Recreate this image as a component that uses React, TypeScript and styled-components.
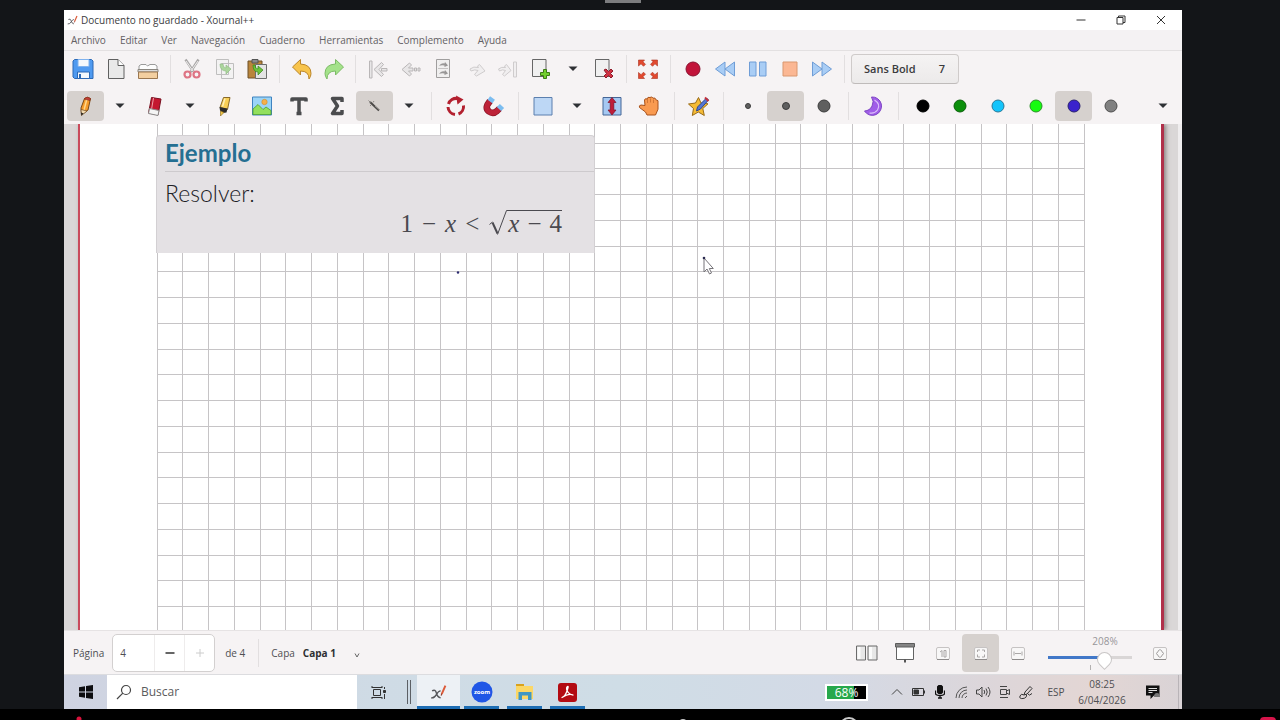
import React, { ReactNode, useState } from "react";
import styled, { createGlobalStyle } from "styled-components";

const GlobalStyle = createGlobalStyle`
  * { box-sizing: border-box; }
  body { margin: 0; background: #131518; }
  button, input, select { font: inherit; color: inherit; }
`;

/* ---------- frame ---------- */

const Screen = styled.div`
  height: 100vh;
  min-height: 480px;
  display: flex;
  flex-direction: column;
  background: #131518;
  color: #4f4f52;
  font-family: "Open Sans", "Noto Sans", sans-serif;
  font-size: 10px;
  line-height: 14px;
  overflow: hidden;
`;

const TopEdge = styled.div`
  flex: 0 0 10px;
  display: flex;
  justify-content: center;
`;

const Handle = styled.div`
  width: 36px;
  height: 3px;
  margin-right: 34px;
  background: #7c7d7f;
`;

const BottomEdge = styled.div`
  flex: 0 0 11px;
  background: #000;
  svg { display: block; width: 100%; height: 11px; }
`;

const Desktop = styled.main`
  flex: 1;
  min-height: 0;
  margin: 0 98px 0 64px;
  display: flex;
  flex-direction: column;
  background: #f5f3f4;
`;

/* ---------- title and menus ---------- */

const TitleBar = styled.header`
  height: 20px;
  display: flex;
  align-items: center;
  padding: 0 1px 0 3px;
  background: #fff;
  color: #3c3c3e;
`;

const Title = styled.h1`
  flex: 1;
  margin: 0 0 0 3px;
  font-size: 10px;
  font-weight: 400;
`;

const WindowButton = styled.button`
  width: 40px;
  height: 20px;
  padding: 0;
  border: 0;
  background: none;
  display: grid;
  place-items: center;
`;

const MenuBar = styled.nav`
  height: 21px;
  display: flex;
  align-items: center;
  background: #f4f2f3;
  border-bottom: 1px solid #e3e0e1;
`;

const MenuItem = styled.button`
  padding: 0 7px;
  border: 0;
  background: none;
  color: #636164;
`;

/* ---------- toolbars ---------- */

const Toolbar = styled.div<{ $height: number; $start: number }>`
  height: ${(p) => p.$height}px;
  padding-left: ${(p) => p.$start}px;
  padding-right: 3px;
  display: flex;
  align-items: center;
  background: #f6f3f4;
`;

const Group = styled.div<{ $width: number }>`
  flex: 0 0 ${(p) => p.$width}px;
  display: flex;
  justify-content: space-between;
`;

const Separator = styled.span<{ $width: number }>`
  flex: 0 0 ${(p) => p.$width}px;
  height: 28px;
  background: linear-gradient(#e2dfe0, #e2dfe0) center / 1px 100% no-repeat;
`;

const ToolButton = styled.button<{ $width: number; $active?: boolean; $faded?: boolean }>`
  flex: 0 0 ${(p) => p.$width}px;
  height: 30px;
  padding: 0;
  border: 0;
  border-radius: 4px;
  background: ${(p) => (p.$active ? "#d6d1ce" : "none")};
  display: grid;
  place-items: center;
  svg { display: block; opacity: ${(p) => (p.$faded ? 0.6 : 1)}; }
`;

const FitButton = styled(ToolButton)`
  height: 38px;
`;

const FontButton = styled.button`
  width: 108px;
  height: 30px;
  padding: 0 13px 0 12px;
  display: flex;
  align-items: center;
  justify-content: space-between;
  border: 1px solid #cfcbca;
  border-bottom-color: #bfbbba;
  border-radius: 4px;
  background: linear-gradient(#f5f3f3, #eceaea);
  color: #3a3b3d;
  font-size: 11px;
  font-weight: 600;
`;

const Spacer = styled.span`
  flex: 1;
`;

/* ---------- document ---------- */

const Canvas = styled.section`
  flex: 1;
  min-height: 0;
  overflow: hidden;
  display: flex;
  padding: 0 18px 0 14px;
  background: linear-gradient(90deg, #dad7d7 0, #dad7d7 calc(100% - 4px), #efedee calc(100% - 4px));
`;

const Sheet = styled.div`
  flex: 1;
  display: grid;
  grid-template-columns: 1fr;
  padding-left: 77px;
  background: #fff;
  border-left: 2px solid #c94a5c;
  border-right: 3px solid #b0304a;
  box-shadow: 2px 0 4px rgba(70, 50, 50, 0.5);
`;

const GridDrawing = styled.svg`
  grid-area: 1 / 1;
  display: block;
  width: 928px;
  height: 100%;
`;

const Block = styled.article`
  grid-area: 1 / 1;
  align-self: start;
  width: 439px;
  height: 118px;
  margin: 11px 0 0 -1px;
  padding-left: 8px;
  background: #e4e1e4;
  border: 1px solid #d3d0d3;
  border-bottom: 0;
  border-radius: 4px 4px 0 0;
  font-family: Lato, "Open Sans", sans-serif;
  color: #202024;
`;

const BlockTitle = styled.h2`
  margin: 0;
  height: 36px;
  border-bottom: 1px solid #cdcacd;
  color: #256f92;
  font-size: 24px;
  line-height: 34px;
  font-weight: 700;
`;

const BlockText = styled.p`
  margin: 7px 0 0;
  font-size: 23px;
  line-height: 28px;
  font-weight: 300;
`;

const Formula = styled.div`
  display: flex;
  justify-content: flex-end;
  align-items: flex-start;
  gap: 9px;
  margin-top: 2px;
  padding-right: 32px;
  font-family: "Liberation Serif", serif;
  font-size: 25px;
  line-height: 30px;
  color: #4a494f;
`;

const Root = styled.span`
  display: flex;
  svg { display: block; }
`;

const Radicand = styled.span`
  display: flex;
  gap: 8px;
  height: 28px;
  margin-top: 1px;
  border-top: 1px solid #4a494f;
  line-height: 26px;
`;

/* ---------- status bar ---------- */

const StatusBar = styled.footer`
  height: 44px;
  display: flex;
  align-items: center;
  padding: 0 3px 0 9px;
  background: #f6f3f4;
  border-top: 1px solid #e6e3e4;
`;

const SpinBox = styled.div`
  width: 103px;
  height: 38px;
  margin: 0 10px 0 8px;
  display: flex;
  border: 1px solid #d3d0d0;
  border-radius: 5px;
  background: #fff;
  overflow: hidden;
`;

const PageInput = styled.input`
  width: 41px;
  padding: 0 0 0 7px;
  border: 0;
  background: none;
`;

const SpinButton = styled.button`
  flex: 1;
  padding: 0;
  border: 0;
  border-left: 1px solid #eeecec;
  background: none;
  display: grid;
  place-items: center;
`;

const LayerSelect = styled.select`
  appearance: none;
  width: 61px;
  margin-left: 8px;
  padding: 0;
  border: 0;
  color: #2e2f31;
  font-weight: 700;
  background: url("data:image/svg+xml,%3Csvg xmlns='http://www.w3.org/2000/svg' width='6' height='6'%3E%3Cpath d='M1 1.5 3 5 5 1.5' fill='none' stroke='%23666'/%3E%3C/svg%3E") right 4px bottom 2px no-repeat;
`;

const ZoomBox = styled.div`
  width: 97px;
  height: 38px;
  margin-left: 7px;
  display: flex;
  flex-direction: column;
  color: #98969a;
`;

const ZoomValue = styled.output`
  width: 40px;
  margin-left: 41px;
  text-align: center;
`;

const ZoomSlider = styled.input<{ $fill: number }>`
  appearance: none;
  width: 84px;
  height: 14px;
  margin: 3px 0 0 4px;
  background: linear-gradient(90deg, #4178c8 ${(p) => p.$fill}%, #d9d6d6 ${(p) => p.$fill}%) center / 100% 3px no-repeat;
  &::-webkit-slider-thumb {
    appearance: none;
    width: 15px;
    height: 15px;
    border: 1px solid #c9c6c6;
    border-radius: 50% 50% 0 50%;
    background: #fff;
    transform: translateY(2px) rotate(45deg);
  }
`;

const ZoomMark = styled.span`
  width: 1px;
  height: 5px;
  margin-left: 46px;
  background: #b3b0b0;
`;

/* ---------- taskbar ---------- */

const Taskbar = styled.div`
  height: 35px;
  display: flex;
  align-items: stretch;
  background: linear-gradient(90deg, #cfd3e1 0, #cfdbe5 28%, #cfdde6 50%, #d3dae6 68%, #dcd6da 82%, #e3d6d4 92%, #d9d3d6 100%);
  border-top: 1px solid #dcdcdf;
`;

const TaskButton = styled.button<{ $width: number }>`
  flex: 0 0 ${(p) => p.$width}px;
  padding: 0;
  border: 0;
  background: none;
  display: grid;
  place-items: center;
`;

const AppButton = styled(TaskButton)<{ $active?: boolean }>`
  background: ${(p) =>
    `linear-gradient(#1d6db3, #1d6db3) bottom / ${p.$active ? "100%" : "35px"} 3px no-repeat ${p.$active ? "#edf1f5" : "transparent"}`};
`;

const SearchBox = styled.label`
  flex: 0 0 250px;
  display: flex;
  align-items: center;
  gap: 9px;
  padding-left: 9px;
  background: #fff;
`;

const SearchInput = styled.input`
  width: 180px;
  padding: 0;
  border: 0;
  background: none;
  font-size: 12px;
  &::placeholder { color: #5b5b5d; opacity: 1; }
`;

const Battery = styled.div`
  width: 43px;
  height: 17px;
  margin-right: 19px;
  align-self: center;
  border: 2px solid #fff;
  background: linear-gradient(90deg, #27a84c 68%, #000 68%);
  color: #fff;
  font-size: 12px;
  line-height: 13px;
  text-align: center;
`;

const Tray = styled.div`
  flex: 0 0 149px;
  display: flex;
  justify-content: space-between;
`;

const Language = styled.button`
  flex: 0 0 40px;
  padding: 0;
  border: 0;
  background: none;
`;

const Clock = styled.time`
  flex: 0 0 52px;
  display: flex;
  flex-direction: column;
  justify-content: center;
  gap: 2px;
  text-align: center;
  white-space: nowrap;
`;

const ShowDesktop = styled.button`
  flex: 0 0 4px;
  padding: 0;
  border: 0;
  border-left: 1px solid #b9b4b8;
  background: none;
`;

/* ---------- icons ---------- */

const Svg = ({ children, size = 24 }: { children: ReactNode; size?: number }) => (
  <svg width={size} height={size} viewBox="0 0 24 24" fill="none" aria-hidden="true">
    {children}
  </svg>
);

const icons: Record<string, ReactNode> = {
  save: (
    <>
      <path d="M3.500 2.500h17l1.500 1.500v17.500h-18.500l-1.500-1.500V4z" fill="#4f9af0" stroke="#2c69b5" />
      <path d="M7 2.500h11v7H7z" fill="#f4f8fc" stroke="#7fb2ee" />
      <path d="M6.500 15h12v6.500h-12z" fill="#f4f8fc" stroke="#2c69b5" />
      <path d="M9 17v4.500" stroke="#2c69b5" strokeWidth="2" />
    </>
  ),
  page: (
    <>
      <path d="M4.500 2.500h9.500l6 6v13H4.500z" fill="#e9e9e9" stroke="#606060" />
      <path d="M14 2.500v6h6" fill="#fff" stroke="#606060" />
    </>
  ),
  folder: (
    <>
      <path d="M3 13V9l2-1.500h5l1.500 1.500L14 7.500h5l2 1.500v4" fill="#fdfdfd" stroke="#9a9a9a" />
      <path d="M2 12.500h20V15H2z" fill="#dcdcdc" stroke="#8b8781" />
      <path d="M2.500 15h19v6.500h-19z" fill="#f3cfa0" stroke="#9a7750" />
    </>
  ),
  cut: (
    <>
      <path d="m5.500 2.500 8 12M18.500 2.500 10.500 15" stroke="#aaa8a8" strokeWidth="2.500" />
      <path d="m6 4 7 10M18 4l-7 10" stroke="#efeded" />
      <circle cx="7.500" cy="17.500" r="3" stroke="#de7484" strokeWidth="2.200" />
      <circle cx="16.500" cy="17.500" r="3" stroke="#de7484" strokeWidth="2.200" />
    </>
  ),
  copy: (
    <>
      <path d="M3.500 2.500h12v15h-12zM8.500 6.500h12v15h-12z" fill="#f2f2f2" stroke="#9b9b9b" />
      <path d="M7 7q0 7 6 7v3l5-5-5-4v3q-3 0-3-4z" fill="#7cc465" stroke="#4f9a3c" strokeWidth=".7" />
    </>
  ),
  paste: (
    <>
      <path d="M3 4h14v17H3z" fill="#b9853b" stroke="#6f5128" />
      <path d="M7 2.500h6V6H7z" fill="#8b8b8b" stroke="#555" />
      <path d="M10.500 7.500h11v14h-11z" fill="#e4e4e4" stroke="#6d6d6d" />
      <path d="M8 8q0 7 5 7v3l5-5-5-4v3q-3 0-3-4z" fill="#6cc43c" stroke="#37861a" strokeWidth=".7" />
    </>
  ),
  undo: <path d="M2.500 10 10.500 2.500v4.500q10.500.5 10.500 9.500 0 3-2 5.500 0-8-8.500-8v4z" fill="#f8c44c" stroke="#bb852a" />,
  redo: <path d="M21.500 10 13.500 2.500v4.500Q3 7.500 3 16.500q0 3 2 5.500 0-8 8.500-8v4z" fill="#a4e28a" stroke="#7cbb66" />,
  first: <path d="M3.500 4h2.500v17H3.500zM8 12.500l7.500-7 2 2-4.500 5 4.500 5-2 2zM15.500 11.500h5.500v2.500h-5.500z" fill="#e8e6e7" stroke="#b9b6b7" />,
  prev: <path d="m3 12.500 7.500-6.500 2 2-3 3H14v3H9.500l3 3-2 2zM15.500 11h2v3h-2zM19 11h2v3h-2z" fill="#e8e6e7" stroke="#b9b6b7" />,
  next: <path d="m21 14-5.500-6.500-2 1.500 1 1.500q-5-1.500-8.500 1.500l1 2q4-2 7-.5l-3.500 4 2 1.500z" fill="#f0eeef" stroke="#cfcccd" />,
  last: <path d="M17.500 5h3v15h-3zM15 13.500l-4.500-6-2 1.500 1 1.500q-4-1-7 1.500l1 2q3-2 6-.5l-3 4 2 1.500z" fill="#f0eeef" stroke="#cfcccd" />,
  gotoPage: (
    <>
      <path d="M5.500 2.500h13v18h-13z" fill="#f0efef" stroke="#a09e9e" />
      <path d="M8 9q2-3.500 5.500-2.500L14 5l3 3.500-3.500 1.500V8.500Q10 8 8 9zM8 17q2-3.500 5.500-2.500l.5-1.500 3 3.500-3.500 1.500v-1.500Q10 16 8 17z" fill="#989696" />
      <path d="M7 11.500h10" stroke="#c4c2c2" />
    </>
  ),
  addPage: (
    <>
      <path d="M3.500 2.500h13.500v17h-13.500z" fill="#f0f0f0" stroke="#666" />
      <path d="M14.500 12.500h3v3h3v3h-3v3h-3v-3h-3v-3h3z" fill="#73cf2e" stroke="#3c7d14" />
    </>
  ),
  deletePage: (
    <>
      <path d="M3.500 2.500h13.500v17h-13.500z" fill="#f0f0f0" stroke="#666" />
      <path d="m12 13 2-1 2.500 2.500L19 12l2 2-2.500 2.500L21 19l-2 2-2.500-2.500L14 21l-2-2 2.500-2.500z" fill="#cf3243" stroke="#8f1b2a" />
    </>
  ),
  fullscreen: (
    <path
      d="M2.500 3h6L7 4.800l2.500 2.500-2 2L5 6.800 2.500 9zM21.500 3h-6L17 4.800l-2.500 2.500 2 2L19 6.800 21.500 9zM2.500 21.500h6L7 19.700l2.500-2.500-2-2L5 17.700 2.500 15.500zM21.500 21.500h-6l1.500-1.800-2.500-2.500 2-2 2.500 2.500 2.500-2.200z"
      fill="#e2492f"
      stroke="#a93220"
      strokeWidth=".6"
    />
  ),
  record: <circle cx="12" cy="12" r="7" fill="#c2143a" stroke="#8a1230" />,
  rewind: <path d="M12 5v14l-9.500-7zM21.500 5v14L12 12z" fill="#a9cdf5" stroke="#6f9dd6" />,
  pause: <path d="M3.500 5h6.500v14H3.500zM13.500 5H20v14h-6.500z" fill="#a9cdf5" stroke="#6f9dd6" />,
  stop: <path d="M5 5h14v14H5z" fill="#fbb793" stroke="#d9976f" />,
  forward: <path d="M12 5v14l9.500-7zM2.500 5v14L12 12z" fill="#a9cdf5" stroke="#6f9dd6" />,
  pencil: (
    <>
      <path d="M10.500 4.500Q13 2 16.500 4.500L14 16l-6.500 5-.5-7z" fill="#f59b2b" stroke="#7a4a14" />
      <path d="M13.200 4 10 16" stroke="#ffd789" strokeWidth="1.500" />
      <path d="M10.500 4.500Q13 2 16.500 4.500L16 6.500l-6-1.500z" fill="#c9413a" stroke="#7a2a1e" strokeWidth=".6" />
      <path d="m7 15.500 6 1.500-5.500 4.500z" fill="#f2dbb2" stroke="#5b3b18" strokeWidth=".6" />
      <path d="m7 18.500 2.500 1-2 2z" fill="#222" />
    </>
  ),
  eraser: (
    <>
      <path d="M8.500 3.500 18 5l-3 16-9.500-2z" fill="#c4162f" stroke="#781020" />
      <path d="m10.500 4-2 11.500" stroke="#f0a0a8" />
      <path d="m6.500 14.500 9.500 2-1 5-9.500-2z" fill="#f5f5f5" stroke="#8c8c8c" />
    </>
  ),
  highlighter: (
    <>
      <path d="M10.500 3.500h6.500L14.500 15.500l-7.500-2z" fill="#f9cf55" stroke="#8a6a28" />
      <path d="m12 4.500-2.500 8" stroke="#fff0b5" strokeWidth="1.500" />
      <path d="m6.500 13 8 1.500-1 4-3.500.5-3-2.500z" fill="#2b2b2b" />
      <path d="m7.500 17 3.500 1.500-3.500 3.500z" fill="#f1c546" stroke="#826315" strokeWidth=".6" />
    </>
  ),
  image: (
    <>
      <path d="M2.500 3h19v18h-19z" fill="#9bd4f7" stroke="#3f83c0" />
      <circle cx="14.500" cy="8" r="2.700" fill="#f4b04a" stroke="#d48a25" strokeWidth=".6" />
      <path d="m3 15 5-4.500 5 5 3-2.500 5 3.500v4H3z" fill="#93e05d" stroke="#4ea02d" strokeWidth=".8" />
    </>
  ),
  text: <path d="M5 7.500V5h14v2.500M12 5v14M9.500 19.500h5" stroke="#4b4c4e" strokeWidth="3.500" strokeLinejoin="round" />,
  sum: <path d="M17 8V4.500H7.500l5 7.500-5 7.500H17V16" stroke="#4b4c4e" strokeWidth="3.500" strokeLinejoin="round" />,
  wand: (
    <>
      <path d="m8 8 9 8.500" stroke="#4c4a48" strokeWidth="2" />
      <path d="m6.500 6.500 2 2M8 12l1-1M12 7l-1 1.500" stroke="#8a8683" />
      <path d="m13 12 4 3.500" stroke="#b5b0ac" strokeWidth=".7" />
    </>
  ),
  rotate: (
    <>
      <path d="M4.500 10a8 8 0 0 1 9-5.500M19.500 11.500a8 8 0 0 1-5 8.500M11 20.500a8 8 0 0 1-7-7.500" stroke="#b3202f" strokeWidth="3" />
      <path d="m12 1.500 7.500 4-6 5z" fill="#b3202f" />
    </>
  ),
  magnet: (
    <>
      <path d="M8 7 5.500 10.500q-2 4.500 1.500 7 4 3 8-.5l2.500-2.500" stroke="#8b1526" strokeWidth="6.500" />
      <path d="M8 7 5.500 10.500q-2 4.500 1.500 7 4 3 8-.5l2.500-2.500" stroke="#bd2238" strokeWidth="5" />
      <path d="m8 7.500 2.500-3.500M17 15l3-3" stroke="#7cbdf0" strokeWidth="6" />
    </>
  ),
  rect: <path d="M3 3.500h18v17.500H3z" fill="#bdd7f5" stroke="#5b7fae" />,
  vertical: (
    <>
      <path d="M3 3.500h18v17.500H3z" fill="#a5c8f2" stroke="#456696" />
      <path d="m12 3.500 4 5h-2.200v7.500H16L12 21l-4-5h2.200V8.500H8z" fill="#bf1d3a" stroke="#7d1027" strokeWidth=".7" />
    </>
  ),
  hand: (
    <>
      <path
        d="M8.500 18 2.500 13.500q-1-2 1.500-2.500l4 .5-.500-5.500q.5-2 2.500-1 .5-2.500 3-1.500 2-1.500 3 .7 2.500-1 2.800 1.500l2.200 1v8.500L18.500 21H10z"
        fill="#f99a50"
        stroke="#a8521c"
      />
      <path d="M10.500 5v4M13.500 4.500v4M16.500 5.500v3.500" stroke="#c86f30" strokeWidth=".8" />
    </>
  ),
  star: (
    <>
      <path d="m11.500 3.500 2.500 5.500 7 .8-5.200 4.700 1.500 7-6-3.500-6 3.500 1.200-7L1.500 10l7-1z" fill="#f5bb35" stroke="#9a6b16" />
      <path d="m19.500 4-9 9-1 4 4-2 8-9z" fill="#5576d6" stroke="#30478e" />
      <path d="m18 3.500 3.500 3.500" stroke="#c3303a" strokeWidth="2" />
    </>
  ),
  fill: (
    <>
      <path d="M10.500 3a9.200 9.200 0 1 1-7 14 9 9 0 0 0 7-14z" fill="#a05de8" stroke="#7d43c4" />
      <path d="M13.500 6q6.500 4 3 10-3 4-8 3" stroke="#dcc0fa" strokeWidth="1.200" />
    </>
  ),
  twoPages: (
    <>
      <path d="M1.500 5h9v14h-9zM13 5h9v14h-9z" fill="#e7e7e7" stroke="#6b6b6b" />
      <path d="M2.500 6h3v12h-3zM14 6h3v12h-3z" fill="#fafafa" />
    </>
  ),
  present: (
    <>
      <path d="M3.500 5.500h17v13h-17z" fill="#fff" stroke="#636363" />
      <path d="M2.500 2.500h19V6h-19z" fill="#858585" stroke="#5c5c5c" />
      <path d="M12 18.500v3" stroke="#555" strokeWidth="2" />
    </>
  ),
};

const PlaqueIcon = ({ d }: { d: string }) => (
  <Svg>
    <rect x="5.500" y="6.500" width="13" height="12" rx="1.500" fill="#f8f7f7" stroke="#c6c3c3" />
    <path d="M6 18.500h12" stroke="#8e8b8b" />
    <path d={d} stroke="#aaa7a7" />
  </Svg>
);

const Arrow = () => (
  <svg width="10" height="6" viewBox="0 0 10 6" aria-hidden="true">
    <path d="M.5.500h9L5 5z" fill="#2e3134" />
  </svg>
);

const XournalIcon = ({ size }: { size: number }) => (
  <svg width={size} height={size} viewBox="0 0 16 16" fill="none" aria-hidden="true">
    <path d="M2 6.500q3-2 4 2t4 4.500M10 6.500q-2 0-4 3.500t-5 3" stroke="#55575b" strokeWidth="1.300" />
    <path d="M14.500 1.500 11 9.500" stroke="#dc5b3a" strokeWidth="1.800" />
    <path d="m11 9-.5 2" stroke="#8d3a2a" />
  </svg>
);

type ToolProps = { name: string; label: string; width?: number; active?: boolean; faded?: boolean };

const Tool = ({ name, label, width = 32, active, faded }: ToolProps) => (
  <ToolButton $width={width} $active={active} $faded={faded} aria-label={label} aria-pressed={active}>
    <Svg>{icons[name]}</Svg>
  </ToolButton>
);

const Drop = ({ label, width = 32 }: { label: string; width?: number }) => (
  <ToolButton $width={width} aria-label={label}>
    <Arrow />
  </ToolButton>
);

const Dot = ({ label, r, color, edge, active }: { label: string; r: number; color: string; edge: string; active?: boolean }) => (
  <ToolButton $width={37} $active={active} aria-label={label} aria-pressed={active}>
    <Svg>
      <circle cx="12" cy="12" r={r} fill={color} stroke={edge} />
    </Svg>
  </ToolButton>
);

const menus = ["Archivo", "Editar", "Ver", "Navegación", "Cuaderno", "Herramientas", "Complemento", "Ayuda"];

const palette = [
  { label: "Negro", color: "#000000", edge: "#000000" },
  { label: "Verde", color: "#0b8f0b", edge: "#0a5f0a" },
  { label: "Celeste", color: "#14c4fb", edge: "#2a7896" },
  { label: "Verde claro", color: "#16fb10", edge: "#2b8f28" },
  { label: "Azul", color: "#3a22cc", edge: "#2a2270" },
  { label: "Gris", color: "#808080", edge: "#4e4e4e" },
];

/* ---------- page grid ---------- */

const CELL = 103 / 4;

const PageGrid = () => (
  <GridDrawing aria-hidden="true">
    <g stroke="#c6c4c6" shapeRendering="crispEdges">
      {Array.from({ length: 37 }, (_, i) => Math.floor(i * CELL)).map((x) => (
        <line key={x} x1={x + 0.5} x2={x + 0.5} y1="0" y2="100%" />
      ))}
      {Array.from({ length: 60 }, (_, i) => Math.floor(19 + i * CELL)).map((y) => (
        <line key={y} x1="0" x2="928" y1={y + 0.5} y2={y + 0.5} />
      ))}
    </g>
    <circle cx="301" cy="148.500" r="1.200" fill="#2b2a70" />
    <path d="M547 134v14l3-3 2.500 5 2-1-2.200-4.500h4z" fill="#fff" stroke="#77757a" />
    <circle cx="547" cy="134" r="1.300" fill="#2b2a50" />
  </GridDrawing>
);

export default function App() {
  const [page, setPage] = useState(4);
  const [zoom, setZoom] = useState(208);
  const fill = Math.round((zoom / 290) * 100);

  return (
    <Screen>
      <GlobalStyle />
      <TopEdge>
        <Handle />
      </TopEdge>

      <Desktop>
        <TitleBar>
          <XournalIcon size={11} />
          <Title>Documento no guardado - Xournal++</Title>
          <WindowButton aria-label="Minimizar">
            <svg width="10" height="10" viewBox="0 0 10 10">
              <path d="M.5 5h9" stroke="#333" />
            </svg>
          </WindowButton>
          <WindowButton aria-label="Restaurar">
            <svg width="10" height="10" viewBox="0 0 10 10" fill="none" stroke="#333">
              <path d="M1 2.500h6v6.500H1zM2.500 2.500V1H9v6.500H7" />
            </svg>
          </WindowButton>
          <WindowButton aria-label="Cerrar">
            <svg width="10" height="10" viewBox="0 0 10 10" stroke="#333">
              <path d="m1 1 8 8M9 1 1 9" />
            </svg>
          </WindowButton>
        </TitleBar>

        <MenuBar>
          {menus.map((m) => (
            <MenuItem key={m}>{m}</MenuItem>
          ))}
        </MenuBar>

        <Toolbar $height={36} $start={3}>
          <Group $width={97}>
            <Tool name="save" label="Guardar" />
            <Tool name="page" label="Nuevo" />
            <Tool name="folder" label="Abrir" />
          </Group>
          <Separator $width={12} />
          <Group $width={97}>
            <Tool name="cut" label="Cortar" />
            <Tool name="copy" label="Copiar" faded />
            <Tool name="paste" label="Pegar" />
          </Group>
          <Separator $width={13} />
          <Group $width={63}>
            <Tool name="undo" label="Deshacer" width={31} />
            <Tool name="redo" label="Rehacer" width={31} />
          </Group>
          <Separator $width={13} />
          <Group $width={195}>
            <Tool name="first" label="Primera página" />
            <Tool name="prev" label="Página anterior" />
            <Tool name="gotoPage" label="Ir a la página" />
            <Tool name="next" label="Página siguiente" />
            <Tool name="last" label="Última página" />
            <Tool name="addPage" label="Añadir página" />
          </Group>
          <Drop label="Opciones de página" width={31} />
          <Tool name="deletePage" label="Eliminar página" />
          <Separator $width={12} />
          <Tool name="fullscreen" label="Pantalla completa" />
          <Separator $width={13} />
          <Group $width={161}>
            <Tool name="record" label="Grabar" />
            <Tool name="rewind" label="Retroceder" />
            <Tool name="pause" label="Pausa" />
            <Tool name="stop" label="Detener" />
            <Tool name="forward" label="Avanzar" />
          </Group>
          <Separator $width={13} />
          <FontButton>
            <span>Sans Bold</span>
            <span>7</span>
          </FontButton>
        </Toolbar>

        <Toolbar $height={37} $start={3}>
          <Group $width={358}>
            <Tool name="pencil" label="Lápiz" width={37} active />
            <Drop label="Opciones de lápiz" />
            <Tool name="eraser" label="Borrador" width={37} />
            <Drop label="Opciones de borrador" />
            <Tool name="highlighter" label="Resaltador" width={37} />
            <Tool name="image" label="Imagen" width={37} />
            <Tool name="text" label="Texto" width={37} />
            <Tool name="sum" label="Fórmula" width={37} />
            <Tool name="wand" label="Dibujo" width={37} active />
            <Drop label="Opciones de dibujo" />
          </Group>
          <Separator $width={12} />
          <Group $width={75}>
            <Tool name="rotate" label="Ajuste de rotación" width={37} />
            <Tool name="magnet" label="Ajuste a la cuadrícula" width={37} />
          </Group>
          <Separator $width={12} />
          <Group $width={144}>
            <Tool name="rect" label="Seleccionar región" width={37} />
            <Drop label="Opciones de selección" />
            <Tool name="vertical" label="Espacio vertical" width={37} />
            <Tool name="hand" label="Mano" width={37} />
          </Group>
          <Separator $width={12} />
          <Tool name="star" label="Valores predeterminados" width={37} />
          <Separator $width={12} />
          <Group $width={113}>
            <Dot label="Fino" r={2.5} color="#5f5f5f" edge="#3c3c3c" />
            <Dot label="Medio" r={3.5} color="#5f5f5f" edge="#3c3c3c" active />
            <Dot label="Grueso" r={6} color="#5f5f5f" edge="#3c3c3c" />
          </Group>
          <Separator $width={12} />
          <Tool name="fill" label="Relleno" width={38} />
          <Separator $width={12} />
          <Group $width={226}>
            {palette.map((c) => (
              <Dot key={c.label} label={c.label} r={6} color={c.color} edge={c.edge} active={c.label === "Azul"} />
            ))}
          </Group>
          <Spacer />
          <Drop label="Más herramientas" />
        </Toolbar>

        <Canvas>
          <Sheet>
            <PageGrid />
            <Block>
              <BlockTitle>Ejemplo</BlockTitle>
              <BlockText>Resolver:</BlockText>
              <Formula>
                <span>1</span>
                <span>−</span>
                <i>x</i>
                <span>&lt;</span>
                <Root>
                  <svg width="20" height="30" viewBox="0 0 20 30" fill="none" stroke="#4a494f">
                    <path d="m1.500 15.500 3-2.500" />
                    <path d="m4.500 13.500 5 11" strokeWidth="2" />
                    <path d="M9.500 25.500 18.500 1.500H20" />
                  </svg>
                  <Radicand>
                    <i>x</i>
                    <span>−</span>
                    <span>4</span>
                  </Radicand>
                </Root>
              </Formula>
            </Block>
          </Sheet>
        </Canvas>

        <StatusBar>
          <label htmlFor="page">Página</label>
          <SpinBox>
            <PageInput id="page" value={page} onChange={(e) => setPage(Number(e.target.value) || 1)} />
            <SpinButton aria-label="Menos" onClick={() => setPage(Math.max(1, page - 1))}>
              <svg width="10" height="10" viewBox="0 0 10 10">
                <path d="M.5 5h9" stroke="#333" strokeWidth="1.500" />
              </svg>
            </SpinButton>
            <SpinButton aria-label="Más" onClick={() => setPage(Math.min(4, page + 1))}>
              <svg width="10" height="10" viewBox="0 0 10 10">
                <path d="M1 5h8M5 1v8" stroke="#ccc" />
              </svg>
            </SpinButton>
          </SpinBox>
          <span>de 4</span>
          <Separator $width={26} />
          <label htmlFor="layer">Capa</label>
          <LayerSelect id="layer">
            <option>Capa 1</option>
          </LayerSelect>
          <Spacer />
          <Tool name="twoPages" label="Páginas dobles" width={38} />
          <Tool name="present" label="Presentación" width={38} />
          <ToolButton $width={38} aria-label="Zoom 100%">
            <PlaqueIcon d="M9 11l2-1.500v6.500M13 9.500h2V16h-2z" />
          </ToolButton>
          <FitButton $width={37} $active aria-label="Ajustar a la página">
            <PlaqueIcon d="M8.500 11V9H11M15.500 11V9H13M8.500 13.500V16H11M15.500 13.500V16H13" />
          </FitButton>
          <ToolButton $width={38} aria-label="Ajustar al ancho">
            <PlaqueIcon d="M8 10.500v4M16 10.500v4M9 12.500h6" />
          </ToolButton>
          <ZoomBox>
            <ZoomValue htmlFor="zoom">{zoom}%</ZoomValue>
            <ZoomSlider
              id="zoom"
              type="range"
              min={0}
              max={290}
              value={zoom}
              $fill={fill}
              aria-label="Zoom"
              onChange={(e) => setZoom(Number(e.target.value))}
            />
            <ZoomMark />
          </ZoomBox>
          <ToolButton $width={38} aria-label="Acercar">
            <PlaqueIcon d="M8 12.500 10 11v-1l2-1.500 2 1.500v1l2 1.500-2 1.500v1L12 16.500 10 15v-1z" />
          </ToolButton>
        </StatusBar>

        <Taskbar>
          <TaskButton $width={43} aria-label="Inicio">
            <svg width="14" height="14" viewBox="0 0 14 14">
              <path d="M0 2.200 6 1.200V6.500H0zM7 1l7-1v6.500H7zM0 7.500h6v5.300l-6-1zM7 7.500h7V14l-7-1z" fill="#0d0d10" />
            </svg>
          </TaskButton>
          <SearchBox>
            <svg width="16" height="16" viewBox="0 0 16 16" fill="none" stroke="#444" strokeWidth="1.200" aria-hidden="true">
              <circle cx="10" cy="6" r="4.500" />
              <path d="M6.800 9.200 1 15" />
            </svg>
            <SearchInput placeholder="Buscar" aria-label="Buscar" />
          </SearchBox>
          <TaskButton $width={43} aria-label="Vista de tareas">
            <svg width="15" height="15" viewBox="0 0 15 15" fill="none" stroke="#333">
              <path d="M2.500 4.500h7v6h-7zM1 1v2M11 1v2M1 14v-2M11 14v-2M1 2.500h10M1 12.500h10M13.500 2v2M13.500 9v5" />
              <path d="M12.500 5.500h2v2h-2z" fill="#333" />
            </svg>
          </TaskButton>
          <TaskButton $width={17} aria-label="Barra">
            <svg width="4" height="24" viewBox="0 0 4 24" stroke="#5c6065">
              <path d="M.5 0v24M3.500 0v24" />
            </svg>
          </TaskButton>
          <AppButton $width={43} $active aria-label="Xournal++">
            <XournalIcon size={17} />
          </AppButton>
          <AppButton $width={43} aria-label="Zoom">
            <svg width="22" height="22" viewBox="0 0 22 22">
              <circle cx="11" cy="11" r="10.500" fill="#1f56e6" />
              <text x="11" y="13" fontSize="6" fontWeight="700" textAnchor="middle" fill="#fff" fontFamily="Open Sans">
                zoom
              </text>
            </svg>
          </AppButton>
          <AppButton $width={43} aria-label="Explorador de archivos">
            <svg width="20" height="18" viewBox="0 0 20 18">
              <path d="M1 1h8v3H1z" fill="#d9a21e" />
              <path d="M1 3h17v13H1z" fill="#fbd766" />
              <path d="M3.500 17v-8h13v8H13v-4.500H7V17z" fill="#3f97c4" />
            </svg>
          </AppButton>
          <AppButton $width={43} aria-label="Lector PDF">
            <svg width="19" height="19" viewBox="0 0 19 19" fill="none">
              <rect width="19" height="19" rx="3" fill="#b30b12" />
              <path d="M4 14.500q3-1 5-6.500t.500-4.500-.500 4q2 4 6 4.500-4-2-11 2.500z" stroke="#fff" strokeWidth="1.300" strokeLinejoin="round" />
            </svg>
          </AppButton>
          <Spacer />
          <Battery>68%</Battery>
          <Tray>
            <TaskButton $width={20} aria-label="Mostrar iconos ocultos">
              <svg width="12" height="8" viewBox="0 0 12 8" fill="none" stroke="#444">
                <path d="m1 6.500 5-5 5 5" />
              </svg>
            </TaskButton>
            <TaskButton $width={20} aria-label="Batería">
              <svg width="14" height="10" viewBox="0 0 14 10" fill="none" stroke="#333">
                <path d="M.5 1.500h11v7H.5zM12.500 3.500v3" />
                <path d="M2 3h4.500v4H2z" fill="#333" />
              </svg>
            </TaskButton>
            <TaskButton $width={20} aria-label="Micrófono">
              <svg width="10" height="14" viewBox="0 0 10 14" fill="none" stroke="#111">
                <rect x="2.500" y=".5" width="5" height="8" rx="1.500" fill="#111" />
                <path d="M.5 5.500v3q0 2 4.500 2t4.500-2v-3M5 10v3.500M3 13h4" strokeWidth="1.300" />
              </svg>
            </TaskButton>
            <TaskButton $width={20} aria-label="Red">
              <svg width="13" height="13" viewBox="0 0 13 13" fill="none" stroke="#555">
                <path d="M1 12A11 11 0 0 1 12 1M4 12a8 8 0 0 1 8-8M7 12a5 5 0 0 1 5-5M10 12l2-2" />
              </svg>
            </TaskButton>
            <TaskButton $width={20} aria-label="Volumen">
              <svg width="15" height="12" viewBox="0 0 15 12" fill="none" stroke="#444">
                <path d="M.5 4v4H3l3 3V1L3 4zM8 4q1.500 2 0 4M10 2.500q2.500 3.500 0 7M12 1q4 5 0 10" />
              </svg>
            </TaskButton>
            <TaskButton $width={20} aria-label="Cámara">
              <svg width="12" height="14" viewBox="0 0 12 14" fill="none" stroke="#444">
                <path d="M1.500 4.500h6v5h-6zM7.500 6l3-1.500v5l-3-1.500M1 1.500h7M1 12.500h8" />
              </svg>
            </TaskButton>
            <TaskButton $width={20} aria-label="Lápiz digital">
              <svg width="15" height="15" viewBox="0 0 15 15" fill="none" stroke="#333">
                <path d="m5 10 1-3 5-5.500 2 2L8 9zM5 10q-3-2-4 1t3 2.500 3.500-4M9 9q1 2.500 4-.5" />
              </svg>
            </TaskButton>
          </Tray>
          <Language>ESP</Language>
          <Clock dateTime="2026-04-06T08:25">
            <span>08:25</span>
            <span>6/04/2026</span>
          </Clock>
          <TaskButton $width={50} aria-label="Notificaciones">
            <svg width="14" height="14" viewBox="0 0 14 14" fill="none">
              <path d="M0 .5h13.500v10H8L4.500 14v-3.500H0z" fill="#111" />
              <path d="M2.500 3.500h8.500M2.500 5.500h8.500M2.500 7.500h4" stroke="#ddd" />
              <path d="M8 12q0-4 3-4t3 4z" fill="#777" />
            </svg>
          </TaskButton>
          <ShowDesktop aria-label="Mostrar escritorio" />
        </Taskbar>
      </Desktop>

      <BottomEdge>
        <svg viewBox="0 0 1280 11" preserveAspectRatio="none" aria-hidden="true">
          <circle cx="79" cy="10" r="2.500" fill="#d8123c" />
          <circle cx="683" cy="15" r="5" fill="#c9c9c9" />
          <circle cx="849" cy="18" r="9" fill="none" stroke="#c9c9c9" strokeWidth="2" />
          <rect x="1260" y="8" width="16" height="8" rx="4" fill="#d6144a" />
        </svg>
      </BottomEdge>
    </Screen>
  );
}
